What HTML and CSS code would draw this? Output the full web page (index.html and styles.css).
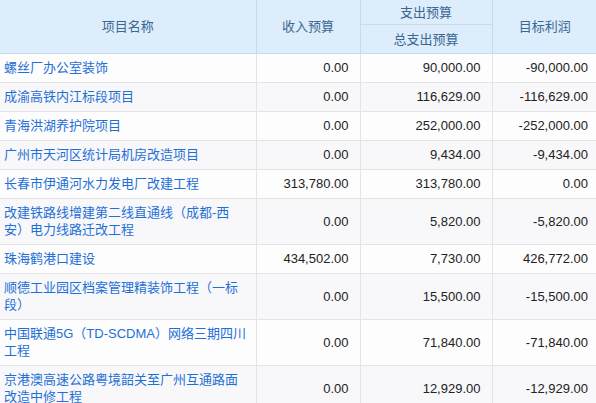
FILE: index.html
```html
<!DOCTYPE html>
<html lang="zh-CN">
<head>
<meta charset="utf-8">
<link rel="stylesheet" href="styles.css">
</head>
<body>
<table class="grid">
  <colgroup>
    <col class="c-name">
    <col class="c-in">
    <col class="c-out">
    <col class="c-profit">
  </colgroup>
  <thead>
    <tr class="h1">
      <th rowspan="2">项目名称</th>
      <th rowspan="2">收入预算</th>
      <th>支出预算</th>
      <th rowspan="2">目标利润</th>
    </tr>
    <tr class="h2">
      <th>总支出预算</th>
    </tr>
  </thead>
  <tbody>
    <tr><td class="name"><a>螺丝厂办公室装饰</a></td><td class="num">0.00</td><td class="num">90,000.00</td><td class="num last">-90,000.00</td></tr>
    <tr><td class="name"><a>成渝高铁内江标段项目</a></td><td class="num">0.00</td><td class="num">116,629.00</td><td class="num last">-116,629.00</td></tr>
    <tr><td class="name"><a>青海洪湖养护院项目</a></td><td class="num">0.00</td><td class="num">252,000.00</td><td class="num last">-252,000.00</td></tr>
    <tr><td class="name"><a>广州市天河区统计局机房改造项目</a></td><td class="num">0.00</td><td class="num">9,434.00</td><td class="num last">-9,434.00</td></tr>
    <tr><td class="name"><a>长春市伊通河水力发电厂改建工程</a></td><td class="num">313,780.00</td><td class="num">313,780.00</td><td class="num last">0.00</td></tr>
    <tr><td class="name"><a>改建铁路线增建第二线直通线（成都-西安）电力线路迁改工程</a></td><td class="num">0.00</td><td class="num">5,820.00</td><td class="num last">-5,820.00</td></tr>
    <tr><td class="name"><a>珠海鹤港口建设</a></td><td class="num">434,502.00</td><td class="num">7,730.00</td><td class="num last">426,772.00</td></tr>
    <tr><td class="name"><a>顺德工业园区档案管理精装饰工程（一标段）</a></td><td class="num">0.00</td><td class="num">15,500.00</td><td class="num last">-15,500.00</td></tr>
    <tr><td class="name"><a>中国联通5G（TD-SCDMA）网络三期四川工程</a></td><td class="num">0.00</td><td class="num">71,840.00</td><td class="num last">-71,840.00</td></tr>
    <tr><td class="name"><a>京港澳高速公路粤境韶关至广州互通路面改造中修工程</a></td><td class="num">0.00</td><td class="num">12,929.00</td><td class="num last">-12,929.00</td></tr>
  </tbody>
</table>
</body>
</html>
```

FILE: styles.css
```css
html, body {
  margin: 0;
  padding: 0;
  background: #ffffff;
}
body {
  font-family: "Liberation Sans", "Noto Sans CJK SC", sans-serif;
  font-size: 13px;
  overflow: hidden;
}
.grid {
  border-collapse: collapse;
  table-layout: fixed;
  width: 597px;
}
.c-name { width: 256px; }
.c-in { width: 104px; }
.c-out { width: 132px; }
.c-profit { width: 105px; }

.grid th {
  background: #ddedfb;
  color: #3b6892;
  font-weight: normal;
  line-height: 17px;
  border: 1px solid #c6dbee;
  border-top: none;
  text-align: center;
  padding: 0 6px;
}
.grid tr.h1 th { height: 24px; }
.grid tr.h2 th { height: 28px; }
.grid th:first-child { border-left: none; }
.grid th:last-child { border-right: none; }

.grid td {
  border: 1px solid #e4e4e6;
  border-top: none;
  line-height: 17px;
  padding: 5px 11px 6px 4px;
  color: #222222;
  vertical-align: middle;
}
.grid td:first-child { border-left: none; }
.grid td:last-child { border-right: none; }
.grid tbody tr:nth-child(even) td { background: #f8f8fb; }
.grid tbody tr:nth-child(odd) td { background: #fdfdfe; }

.grid td.name {
  padding-right: 7px;
}
.grid td.name a {
  color: #1f70d6;
  text-decoration: none;
}
.grid td.num {
  text-align: right;
}
.grid td.num.last {
  padding-right: 9px;
}
```
